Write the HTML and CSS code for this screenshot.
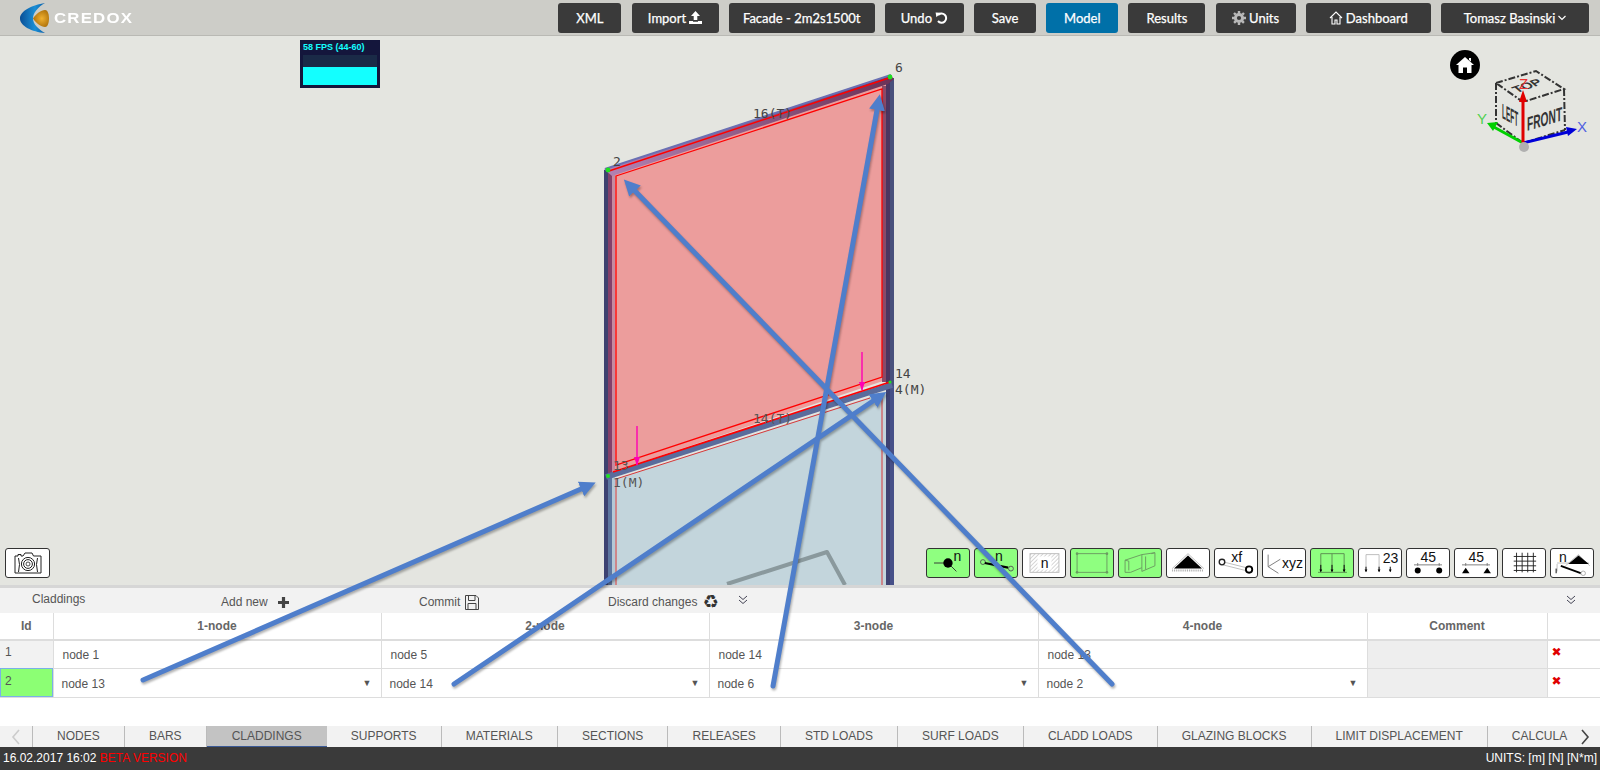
FILE: index.html
```html
<!DOCTYPE html>
<html lang="en">
<head>
    <meta charset="UTF-8">
    <meta name="viewport" content="width=device-width, initial-scale=1.0">
    <title>Creodox - Claddings</title>
    <link rel="stylesheet" href="styles.css">
</head>
<body>
    <header class="topbar">
        <div class="logo">
            <svg class="logo-mark" width="30" height="32" viewBox="0 0 30 32">
                <defs>
                    <linearGradient id="logoBlue" x1="0" y1="0" x2="1" y2="0">
                        <stop offset="0" stop-color="#0a4f96"/>
                        <stop offset="0.6" stop-color="#1b8fd6"/>
                        <stop offset="1" stop-color="#0b5ea8"/>
                    </linearGradient>
                    <radialGradient id="logoGold" cx="0.55" cy="0.5" r="0.6">
                        <stop offset="0" stop-color="#f0b030"/>
                        <stop offset="1" stop-color="#a86c08"/>
                    </radialGradient>
                </defs>
                <path d="M25 1 C12 3 0 9 0 16.5 C0 24 12 30 25 31 C18 27 13 22 13 16.5 C13 11 18 5 25 1Z" fill="url(#logoBlue)"/>
                <path d="M13 16.5 C16 12 21 8 25 8 C28 8 29 13 29 16.5 C29 20 28 25 25 25 C21 25 16 21 13 16.5Z" fill="url(#logoGold)"/>
            </svg>
            <span class="logo-text">CREDOX</span>
        </div>
        <nav class="nav">
            <button class="nav-btn">XML</button>
            <button class="nav-btn">Import
                <svg width="13" height="13" viewBox="0 0 13 13"><path d="M6.5 0 L11 5 H8.3 V9 H4.7 V5 H2Z M0 10 H4 V10.8 H9 V10 H13 V13 H0Z" fill="#fff"/></svg>
            </button>
            <button class="nav-btn">Facade - 2m2s1500t</button>
            <button class="nav-btn">Undo
                <svg width="13" height="13" viewBox="0 0 13 13"><path d="M3 4.2 A4.6 4.6 0 1 1 3 10" fill="none" stroke="#fff" stroke-width="2"/><path d="M0.6 1.4 L5.6 1.8 L1.4 6.2Z" fill="#fff"/></svg>
            </button>
            <button class="nav-btn">Save</button>
            <button class="nav-btn active">Model</button>
            <button class="nav-btn">Results</button>
            <button class="nav-btn">
                <svg width="14" height="14" viewBox="0 0 14 14"><circle cx="7" cy="7" r="3.6" fill="none" stroke="#b9b9b9" stroke-width="3"/><path d="M7 0V14M0 7H14M2 2L12 12M12 2L2 12" stroke="#b9b9b9" stroke-width="2.4" stroke-dasharray="2.4 9.2 2.4 20"/></svg>
                Units
            </button>
            <button class="nav-btn">
                <svg width="14" height="14" viewBox="0 0 14 14"><path d="M1 7 L7 1 L13 7 M3 6 V13 H6 V9 H8 V13 H11 V6" fill="none" stroke="#fff" stroke-width="1.1"/></svg>
                Dashboard
            </button>
            <button class="nav-btn">Tomasz Basinski
                <svg width="8" height="6" viewBox="0 0 8 6"><path d="M0.5 1 L4 4.5 L7.5 1" fill="none" stroke="#fff" stroke-width="1.2"/></svg>
            </button>
        </nav>
    </header>

    <main class="viewport">
        <svg class="scene" width="1600" height="549" viewBox="0 36 1600 549">
            <defs>
                <linearGradient id="topBeam" x1="0" y1="0" x2="1" y2="0">
                    <stop offset="0" stop-color="#b283b4"/>
                    <stop offset="1" stop-color="#6c3156"/>
                </linearGradient>
            </defs>
            <!-- glass panes -->
            <polygon class="pane-blue" points="612,480 886,392 886,585 612,585"/>
            <polygon class="pane-red" points="612,174 886,84 886,380 612,472"/>

            <!-- columns, upper part -->
            <rect x="604" y="170" width="4" height="307" fill="#3e4270"/>
            <rect x="608" y="172" width="4" height="304" fill="#83406a"/>
            <rect x="612" y="174" width="3" height="298" fill="#c48aa0"/>
            <rect x="882" y="86" width="4" height="296" fill="#8a4a68"/>
            <rect x="886" y="80" width="4" height="305" fill="#4b3560"/>
            <rect x="890" y="78" width="4" height="307" fill="#48507c"/>
            <!-- columns, lower part -->
            <rect x="604" y="477" width="4" height="108" fill="#3c4272"/>
            <rect x="608" y="477" width="4" height="108" fill="#5d76a0"/>
            <rect x="612" y="477" width="3" height="108" fill="#b4c8d6"/>
            <rect x="886" y="385" width="4" height="200" fill="#3e4272"/>
            <rect x="890" y="385" width="4" height="200" fill="#465088"/>

            <!-- beams -->
            <polygon points="604,169 890,75 894,79 888,84 612,176" fill="url(#topBeam)"/>
            <line x1="605" y1="169" x2="891" y2="75" stroke="#6a70b4" stroke-width="2"/>
            <line x1="609" y1="171" x2="889" y2="78" stroke="#f00" stroke-width="1.4"/>
            <polygon class="red-frame" points="616,176 882,89 882,377 616,465"/>

            <line x1="606" y1="477" x2="892" y2="385" stroke="#5a6c9c" stroke-width="6"/>
            <line x1="613" y1="472" x2="890" y2="382" stroke="#f00" stroke-width="1.8"/>
            <line class="red-thin" x1="616" y1="479" x2="870" y2="398"/>
            <line class="red-thin" x1="616" y1="479" x2="616" y2="585"/>
            <line class="red-thin" x1="882" y1="393" x2="882" y2="585"/>

            <polyline points="727,584 827,552 845,585" fill="none" stroke="#8a999d" stroke-width="4" stroke-linejoin="round"/>

            <!-- surface loads -->
            <line class="load" x1="637" y1="426" x2="637" y2="465"/>
            <polygon class="load-head" points="634,457 640,457 637,466"/>
            <line class="load" x1="862" y1="352" x2="862" y2="390"/>
            <polygon class="load-head" points="859,382 865,382 862,391"/>

            <!-- nodes -->
            <circle class="node-dot" cx="608" cy="170" r="2.4"/>
            <circle class="node-dot" cx="890" cy="77" r="2.4"/>
            <circle class="node-dot" cx="608" cy="476" r="2"/>
            <circle class="node-dot" cx="890" cy="382" r="1.6"/>

            <text class="label" x="613" y="166">2</text>
            <text class="label" x="895" y="72">6</text>
            <text class="label" x="753" y="118">16(T)</text>
            <text class="label" x="895" y="378">14</text>
            <text class="label" x="895" y="394">4(M)</text>
            <text class="label dim" x="753" y="423">14(T)</text>
            <text class="label dim" x="613" y="470">13</text>
            <text class="label dim" x="613" y="487">1(M)</text>
        </svg>

        <div class="fps">
            <div class="fps-text">58 FPS (44-60)</div>
            <div class="fps-graph"><div class="fps-bar"></div></div>
        </div>

        <button class="home-btn">
            <svg width="18" height="16" viewBox="0 0 18 16"><path d="M9 0 L18 8 H15.5 V16 H11 V10.5 H7 V16 H2.5 V8 H0Z M13 1 H15 V4.5 L13 3Z" fill="#fff"/></svg>
        </button>

        <svg class="cube" width="128" height="100" viewBox="-8 0 128 100">
            <g class="cube-edges">
                <polygon points="16,23 56,11 84,29 43,42"/>
                <line x1="16" y1="23" x2="16" y2="63"/>
                <line x1="84" y1="29" x2="85" y2="70"/>
                <line x1="43" y1="42" x2="43" y2="83"/>
                <line x1="16" y1="63" x2="43" y2="83"/>
                <line x1="43" y1="83" x2="85" y2="70"/>
            </g>
            <text class="cube-text" transform="translate(22 58) matrix(1 0.55 0 1 0 0) scale(0.43 1.4)" font-size="15">LEFT</text>
            <text class="cube-text" transform="translate(47 71) matrix(1 -0.3 0 1 0 0) scale(0.68 1.3)" font-size="15">FRONT</text>
            <text class="cube-text" transform="translate(37 33) matrix(1 -0.35 0.7 0.6 0 0)" font-size="13">TOP</text>
            <line x1="43" y1="83" x2="12" y2="66" stroke="#00d000" stroke-width="3"/>
            <polygon points="7,63 18,62 13,71" fill="#00d000"/>
            <line x1="43" y1="83" x2="88" y2="72" stroke="#0000d8" stroke-width="3"/>
            <polygon points="97,69 86,67 88,76" fill="#0000d8"/>
            <line x1="43" y1="85" x2="43" y2="40" stroke="#e00000" stroke-width="3"/>
            <polygon points="43,30 39,42 47,42" fill="#e00000"/>
            <text class="axis" x="39" y="29" fill="#e83030">Z</text>
            <text class="axis" x="-3" y="64" fill="#50d050">Y</text>
            <text class="axis" x="97" y="72" fill="#5060e0">X</text>
            <circle cx="44" cy="87" r="5" fill="#b0b0b0"/>
        </svg>

        <button class="camera-btn">
            <svg width="28" height="22" viewBox="0 0 28 22">
                <path d="M1 4 H4 V2.5 H7 V4 H9 L11 1 H18 L19.5 4 H27 V21 H1Z" fill="none" stroke="#222" stroke-width="1"/>
                <circle cx="14" cy="12" r="6.6" fill="none" stroke="#222" stroke-width="1"/>
                <circle cx="14" cy="12" r="4.4" fill="none" stroke="#222" stroke-width="1"/>
                <circle cx="14" cy="12" r="2" fill="none" stroke="#222" stroke-width="0.8"/>
                <path d="M4.5 6 Q6.5 12 4.5 20 M23.5 6 Q21.5 12 23.5 20" fill="none" stroke="#222" stroke-width="1"/>
            </svg>
        </button>

        <div class="view-tools">
            <button class="view-btn on">
                <svg viewBox="0 0 44 30"><path d="M7 15H22M22 15L31 24" stroke="#333" fill="none"/><circle cx="22" cy="15" r="5" fill="#000"/><text class="ico-text" x="28" y="13">n</text></svg>
            </button>
            <button class="view-btn on">
                <svg viewBox="0 0 44 30"><circle cx="8" cy="14" r="2.6" fill="none" stroke="#555"/><circle cx="38" cy="21" r="2.6" fill="none" stroke="#555"/><path d="M10 15L35 20" stroke="#000" stroke-width="2.4"/><text class="ico-text" x="21" y="13">n</text></svg>
            </button>
            <button class="view-btn">
                <svg viewBox="0 0 44 30">
                    <defs><pattern id="hatch" width="3" height="3" patternUnits="userSpaceOnUse" patternTransform="rotate(45)"><line x1="0" y1="0" x2="0" y2="3" stroke="#aaa" stroke-width="1"/></pattern></defs>
                    <rect x="7" y="5" width="31" height="20" fill="url(#hatch)" stroke="#bbb"/><rect x="15" y="8" width="15" height="14" fill="#fff"/><text class="ico-text" x="18.5" y="20">n</text>
                </svg>
            </button>
            <button class="view-btn on">
                <svg viewBox="0 0 44 30"><rect x="6" y="5" width="32" height="20" fill="none" stroke="#6a9a60"/><circle cx="6" cy="5" r="1.4" fill="#6a9a60"/><circle cx="38" cy="5" r="1.4" fill="#6a9a60"/><circle cx="6" cy="25" r="1.4" fill="#6a9a60"/><circle cx="38" cy="25" r="1.4" fill="#6a9a60"/></svg>
            </button>
            <button class="view-btn on">
                <svg viewBox="0 0 44 30"><path d="M6 12L24 6V20L12 25H6ZM10 13V23M6 12L10 13M24 6L38 4V18L24 24V20M28 8V22M38 4L34 5" fill="none" stroke="#6a9a60"/></svg>
            </button>
            <button class="view-btn">
                <svg viewBox="0 0 44 30"><path d="M22 5L5 21M22 5L39 21" stroke="#bbb"/><polygon points="22,7 7,21 37,21" fill="#000"/><line x1="5" y1="23" x2="39" y2="23" stroke="#aaa" stroke-width="2" stroke-dasharray="1 1"/></svg>
            </button>
            <button class="view-btn">
                <svg viewBox="0 0 44 30"><path d="M9 14L33 20M8 17L32 23" stroke="#bbb"/><circle cx="7" cy="14" r="3" fill="none" stroke="#222" stroke-width="1.4"/><circle cx="36" cy="22" r="3.4" fill="none" stroke="#000" stroke-width="2"/><text class="ico-text" x="17" y="14">xf</text></svg>
            </button>
            <button class="view-btn">
                <svg viewBox="0 0 44 30"><path d="M5 6V19L18 11M5 19L16 26" fill="none" stroke="#777"/><text class="ico-text" x="20" y="20">xyz</text></svg>
            </button>
            <button class="view-btn on">
                <svg viewBox="0 0 44 30"><path d="M10 24V5H35V24M22 5V24M7 25H38" fill="none" stroke="#5a8a50"/><path d="M10 17V24M22 17V24M35 17V24" stroke="#000"/><path d="M8.5 22H11.5L10 25ZM20.5 22H23.5L22 25ZM33.5 22H36.5L35 25Z" fill="#000"/></svg>
            </button>
            <button class="view-btn">
                <svg viewBox="0 0 44 30"><path d="M7 24V6H21V24" fill="none" stroke="#bbb"/><path d="M7 19V24M21 19V24M33 19V24" stroke="#000"/><path d="M5.5 22H8.5L7 25ZM19.5 22H22.5L21 25ZM31.5 22H34.5L33 25Z" fill="#000"/><text class="ico-text" x="25" y="15">23</text></svg>
            </button>
            <button class="view-btn">
                <svg viewBox="0 0 44 30"><text class="ico-text" x="14" y="14">45</text><path d="M7 17H37M11 15V18M34 15V18" stroke="#777"/><circle cx="11" cy="23" r="3.2" fill="#000"/><circle cx="34" cy="23" r="3.2" fill="#000"/></svg>
            </button>
            <button class="view-btn">
                <svg viewBox="0 0 44 30"><text class="ico-text" x="14" y="14">45</text><path d="M7 17H37M11 15V18M34 15V18" stroke="#777"/><polygon points="11,20 7,26 15,26" fill="#000"/><polygon points="34,20 30,26 38,26" fill="#000"/></svg>
            </button>
            <button class="view-btn">
                <svg viewBox="0 0 44 30"><path d="M14 4V25M20 4V25M26 4V25M32 4V25M11 8H35M11 13H35M11 18H35M11 23H35" stroke="#222" fill="none"/></svg>
            </button>
            <button class="view-btn">
                <svg viewBox="0 0 44 30"><path d="M6 15H40M29 6L15 18M29 6L41 18M6 16V24" stroke="#bbb" fill="none"/><polygon points="29,7 18,16 40,16" fill="#000"/><path d="M10 18L32 26" stroke="#000" stroke-width="2"/><circle cx="34" cy="26" r="2.4" fill="#fff" stroke="#aaa"/><text class="ico-text" x="8" y="14">n</text><path d="M5 21V26" stroke="#000"/></svg>
            </button>
        </div>
    </main>

    <section class="panel">
        <div class="panel-tools">
            <span class="panel-title">Claddings</span>
            <span class="panel-action add">Add new
                <svg width="13" height="13" viewBox="0 0 13 13"><path d="M6.5 1V12M1 6.5H12" stroke="#444" stroke-width="3.2"/></svg>
            </span>
            <span class="panel-action commit">Commit
                <svg width="14" height="15" viewBox="0 0 14 15"><path d="M0.5 0.5H11L13.5 3V14.5H0.5Z M3.5 0.5V5.5H10V0.5 M3 14.5V8.5H11V14.5" fill="none" stroke="#444"/></svg>
            </span>
            <span class="panel-action discard">Discard changes <span class="recycle">♻</span></span>
            <svg class="chevrons" width="10" height="10" viewBox="0 0 10 10"><path d="M1 1L5 4.5L9 1M1 5L5 8.5L9 5" fill="none" stroke="#445"/></svg>
            <svg class="chevrons far" width="10" height="10" viewBox="0 0 10 10"><path d="M1 1L5 4.5L9 1M1 5L5 8.5L9 5" fill="none" stroke="#445"/></svg>
        </div>
        <table class="grid">
            <colgroup>
                <col class="col-id">
                <col class="col-node">
                <col class="col-node">
                <col class="col-node-wide">
                <col class="col-node-wide">
                <col class="col-comment">
                <col class="col-del">
            </colgroup>
            <thead>
                <tr>
                    <th>Id</th>
                    <th>1-node</th>
                    <th>2-node</th>
                    <th>3-node</th>
                    <th>4-node</th>
                    <th>Comment</th>
                    <th></th>
                </tr>
            </thead>
            <tbody>
                <tr>
                    <td class="cell-id">1</td>
                    <td class="cell-node">node 1</td>
                    <td class="cell-node">node 5</td>
                    <td class="cell-node">node 14</td>
                    <td class="cell-node">node 13</td>
                    <td class="cell-comment"></td>
                    <td class="cell-del">✖</td>
                </tr>
                <tr class="row-edit">
                    <td class="cell-id selected">2</td>
                    <td class="cell-select">node 13<span class="caret">▼</span></td>
                    <td class="cell-select">node 14<span class="caret">▼</span></td>
                    <td class="cell-select">node 6<span class="caret">▼</span></td>
                    <td class="cell-select">node 2<span class="caret">▼</span></td>
                    <td class="cell-comment"></td>
                    <td class="cell-del">✖</td>
                </tr>
            </tbody>
        </table>
    </section>

    <div class="tabs">
        <span class="tab-arrow left">
            <svg width="10" height="16" viewBox="0 0 10 16"><path d="M8 1L2 8L8 15" fill="none" stroke="#ccc" stroke-width="1.6"/></svg>
        </span>
        <span class="tab">NODES</span>
        <span class="tab">BARS</span>
        <span class="tab current">CLADDINGS</span>
        <span class="tab">SUPPORTS</span>
        <span class="tab">MATERIALS</span>
        <span class="tab">SECTIONS</span>
        <span class="tab">RELEASES</span>
        <span class="tab">STD LOADS</span>
        <span class="tab">SURF LOADS</span>
        <span class="tab">CLADD LOADS</span>
        <span class="tab">GLAZING BLOCKS</span>
        <span class="tab">LIMIT DISPLACEMENT</span>
        <span class="tab last">CALCULA</span>
        <span class="tab-arrow right">
            <svg width="10" height="16" viewBox="0 0 10 16"><path d="M2 1L8 8L2 15" fill="none" stroke="#444" stroke-width="1.6"/></svg>
        </span>
    </div>

    <footer class="statusbar">
        <span>16.02.2017 16:02 <span class="beta">BETA VERSION</span></span>
        <span>UNITS: [m] [N] [N*m]</span>
    </footer>

    <!-- hand drawn annotation arrows on top of the screenshot -->
    <svg class="notes" width="1600" height="770" viewBox="0 0 1600 770">
        <defs>
            <marker id="head" markerUnits="userSpaceOnUse" markerWidth="18" markerHeight="16" refX="0" refY="8" orient="auto">
                <path d="M0 0L16 8L0 16Z" fill="#4f7ecb"/>
            </marker>
        </defs>
        <line class="note-line" x1="143" y1="680" x2="581" y2="489" marker-end="url(#head)"/>
        <line class="note-line" x1="454" y1="684" x2="873" y2="401" marker-end="url(#head)"/>
        <line class="note-line" x1="773" y1="686" x2="877" y2="110" marker-end="url(#head)"/>
        <line class="note-line" x1="1112" y1="684" x2="635" y2="191" marker-end="url(#head)"/>
    </svg>
</body>
</html>
```

FILE: styles.css
```css
body {
    font-family: "Liberation Sans", Arial, sans-serif;
    margin: 0;
    width: 1600px;
    height: 770px;
    overflow: hidden;
    position: relative;
    display: flex;
    flex-direction: column;
    background: white;
    color: #555;
}

/* top bar */
.topbar {
    height: 35px;
    flex: none;
    display: flex;
    align-items: center;
    justify-content: space-between;
    background: #cdcdc8;
    border-bottom: 1px solid #b9b9b4;
    padding: 0 11px 0 20px;
}
.logo {
    display: flex;
    align-items: center;
    gap: 4px;
}
.logo-mark {
    display: block;
}
.logo-text {
    font-size: 14px;
    font-weight: bold;
    letter-spacing: 1px;
    color: white;
    transform: scaleX(1.2);
    transform-origin: left;
}
.nav {
    display: grid;
    grid-template-columns: 63px 87px 146px 79px 62px 72px 77px 80px 125px 148px;
    gap: 10.2px;
}
.nav-btn {
    height: 30px;
    padding: 0;
    border: none;
    border-radius: 3px;
    background: #3a3a3a;
    color: white;
    font-family: Lato, sans-serif;
    font-size: 13px;
    -webkit-text-stroke: 0.25px white;
    display: flex;
    align-items: center;
    justify-content: center;
    gap: 3px;
}
.nav-btn.active {
    background: #0070a8;
}

/* 3d view */
.viewport {
    flex: 1;
    position: relative;
    background: #e4e5e0;
    overflow: hidden;
}
.scene {
    position: absolute;
    left: 0;
    top: 0;
}
.pane-red {
    fill: #ec9d9c;
}
.pane-blue {
    fill: #c3d5dc;
}
.red-frame {
    fill: none;
    stroke: #f00;
    stroke-width: 1.3;
}
.red-thin {
    stroke: #d83838;
    stroke-width: 1;
}
.load {
    stroke: #ff00b4;
    stroke-width: 1.4;
}
.load-head {
    fill: #ff00b4;
}
.node-dot {
    fill: #1fe01f;
}
.label {
    font-family: "DejaVu Sans Mono", monospace;
    font-size: 13px;
    fill: #444;
}
.label.dim {
    fill: #555;
}
.fps {
    position: absolute;
    left: 300px;
    top: 4px;
    width: 74px;
    height: 48px;
    padding: 0 3px;
    background: #14163c;
}
.fps-text {
    font-size: 9px;
    font-weight: bold;
    line-height: 15px;
    color: #14ffff;
    white-space: nowrap;
}
.fps-graph {
    height: 30px;
    background: #1a2a47;
    display: flex;
    align-items: flex-end;
}
.fps-bar {
    width: 100%;
    height: 18px;
    background: #13ffff;
}
.home-btn {
    position: absolute;
    left: 1450px;
    top: 14px;
    width: 30px;
    height: 30px;
    padding: 0;
    border: none;
    border-radius: 50%;
    background: black;
    display: flex;
    align-items: center;
    justify-content: center;
}
.cube {
    position: absolute;
    left: 1472px;
    top: 24px;
}
.cube-edges {
    fill: none;
    stroke: #333;
    stroke-width: 2;
    stroke-dasharray: 7 2 2 2;
}
.cube-text {
    font-family: "Liberation Sans", sans-serif;
    font-weight: bold;
    fill: #333;
}
.axis {
    font-family: "Liberation Sans", sans-serif;
    font-size: 15px;
}
.camera-btn {
    position: absolute;
    left: 5px;
    bottom: 7px;
    width: 45px;
    height: 30px;
    padding: 0;
    border: 1px solid #333;
    border-radius: 3px;
    background: white;
    display: flex;
    align-items: center;
    justify-content: center;
}
.view-tools {
    position: absolute;
    right: 6px;
    bottom: 7px;
    display: flex;
    gap: 4px;
}
.view-btn {
    width: 44px;
    height: 30px;
    padding: 0;
    border: 1px solid #333;
    border-radius: 3px;
    background: white;
}
.view-btn.on {
    background: #8fff80;
}
.view-btn svg {
    display: block;
    width: 100%;
    height: 100%;
}
.ico-text {
    font-family: "Liberation Sans", sans-serif;
    font-size: 15px;
    fill: #111;
}

/* claddings panel */
.panel {
    flex: none;
    height: 141px;
    border-top: 3px solid #d6d6d6;
    box-sizing: border-box;
    font-size: 12px;
}
.panel-tools {
    height: 25px;
    background: #f2f2f2;
    display: flex;
    align-items: center;
    padding: 0 24px 0 32px;
}
.panel-title {
    width: 189px;
    margin-top: -3px;
}
.panel-action {
    display: flex;
    align-items: center;
    gap: 5px;
    margin-top: 3px;
}
.panel-action.add {
    width: 198px;
    gap: 9px;
}
.panel-action.commit {
    width: 189px;
}
.recycle {
    font-family: "DejaVu Sans", sans-serif;
    font-size: 18px;
    line-height: 14px;
    color: #333;
}
.chevrons {
    margin-left: 19px;
    margin-top: -2px;
}
.chevrons.far {
    margin-left: auto;
}
.grid {
    width: 1600px;
    table-layout: fixed;
    border-collapse: collapse;
}
.col-id {
    width: 53px;
}
.col-node {
    width: 328px;
}
.col-node-wide {
    width: 329px;
}
.col-comment {
    width: 180px;
}
.col-del {
    width: 53px;
}
.grid th {
    height: 26px;
    padding: 0;
    background: white;
    border: 1px solid #ddd;
    border-top: none;
    border-bottom: 2px solid #ddd;
    font-weight: bold;
    color: #666;
}
.grid td {
    height: 28px;
    padding: 2px 0 0;
    border: 1px solid #ddd;
    box-sizing: border-box;
}
.grid .row-edit td {
    height: 29px;
    padding-top: 3px;
}
.grid th:first-child,
.grid td:first-child {
    border-left: none;
}
.grid th:last-child,
.grid td:last-child {
    border-right: none;
}
.grid .cell-id {
    padding: 0 0 4px 5px;
    background: #f2f2f2;
}
.grid .row-edit .cell-id.selected {
    padding-top: 0;
    background: #8cff74;
    outline: 1px solid #7ab0e8;
    outline-offset: -1px;
}
.grid .cell-node {
    padding-left: 9px;
}
.grid .cell-select {
    padding-left: 8px;
    position: relative;
}
.caret {
    position: absolute;
    right: 9px;
    top: 9px;
    font-size: 9px;
    color: #555;
}
.cell-comment {
    background: #eee;
}
.grid .cell-del,
.grid .row-edit .cell-del {
    padding: 0 0 4px 4px;
    color: #e00000;
    font-family: "DejaVu Sans", sans-serif;
    font-size: 12px;
}

/* tabs */
.tabs {
    flex: none;
    height: 21px;
    display: flex;
    background: #f2f2f2;
    overflow: hidden;
    position: relative;
    font-size: 12px;
}
.tab {
    flex: none;
    padding: 0 24.07px;
    line-height: 20px;
    border-right: 1px solid #bbb;
    white-space: nowrap;
    color: #555;
}
.tab.current {
    background: #c3c3c3;
    border-right: none;
    border-bottom: 1px solid #3b5a96;
    height: 20px;
    padding: 0 25.07px;
}
.tab.last {
    border-right: none;
    padding-right: 0;
}
.tab-arrow {
    background: #f2f2f2;
    display: flex;
    align-items: center;
    justify-content: center;
}
.tab-arrow.left {
    flex: none;
    width: 32px;
    border-right: 1px solid #bbb;
}
.tab-arrow.right {
    position: absolute;
    right: 0;
    top: 0;
    width: 30px;
    height: 21px;
}

/* status bar */
.statusbar {
    flex: none;
    height: 23px;
    display: flex;
    justify-content: space-between;
    padding: 4px 3px 0;
    box-sizing: border-box;
    background: #3a3a3a;
    color: white;
    font-size: 12px;
}
.beta {
    color: #f00;
}

/* annotation arrows */
.notes {
    position: absolute;
    left: 0;
    top: 0;
    pointer-events: none;
    filter: drop-shadow(1px 2px 1px rgba(0, 0, 0, 0.3));
}
.note-line {
    stroke: #4f7ecb;
    stroke-width: 5;
    stroke-linecap: round;
}
```
